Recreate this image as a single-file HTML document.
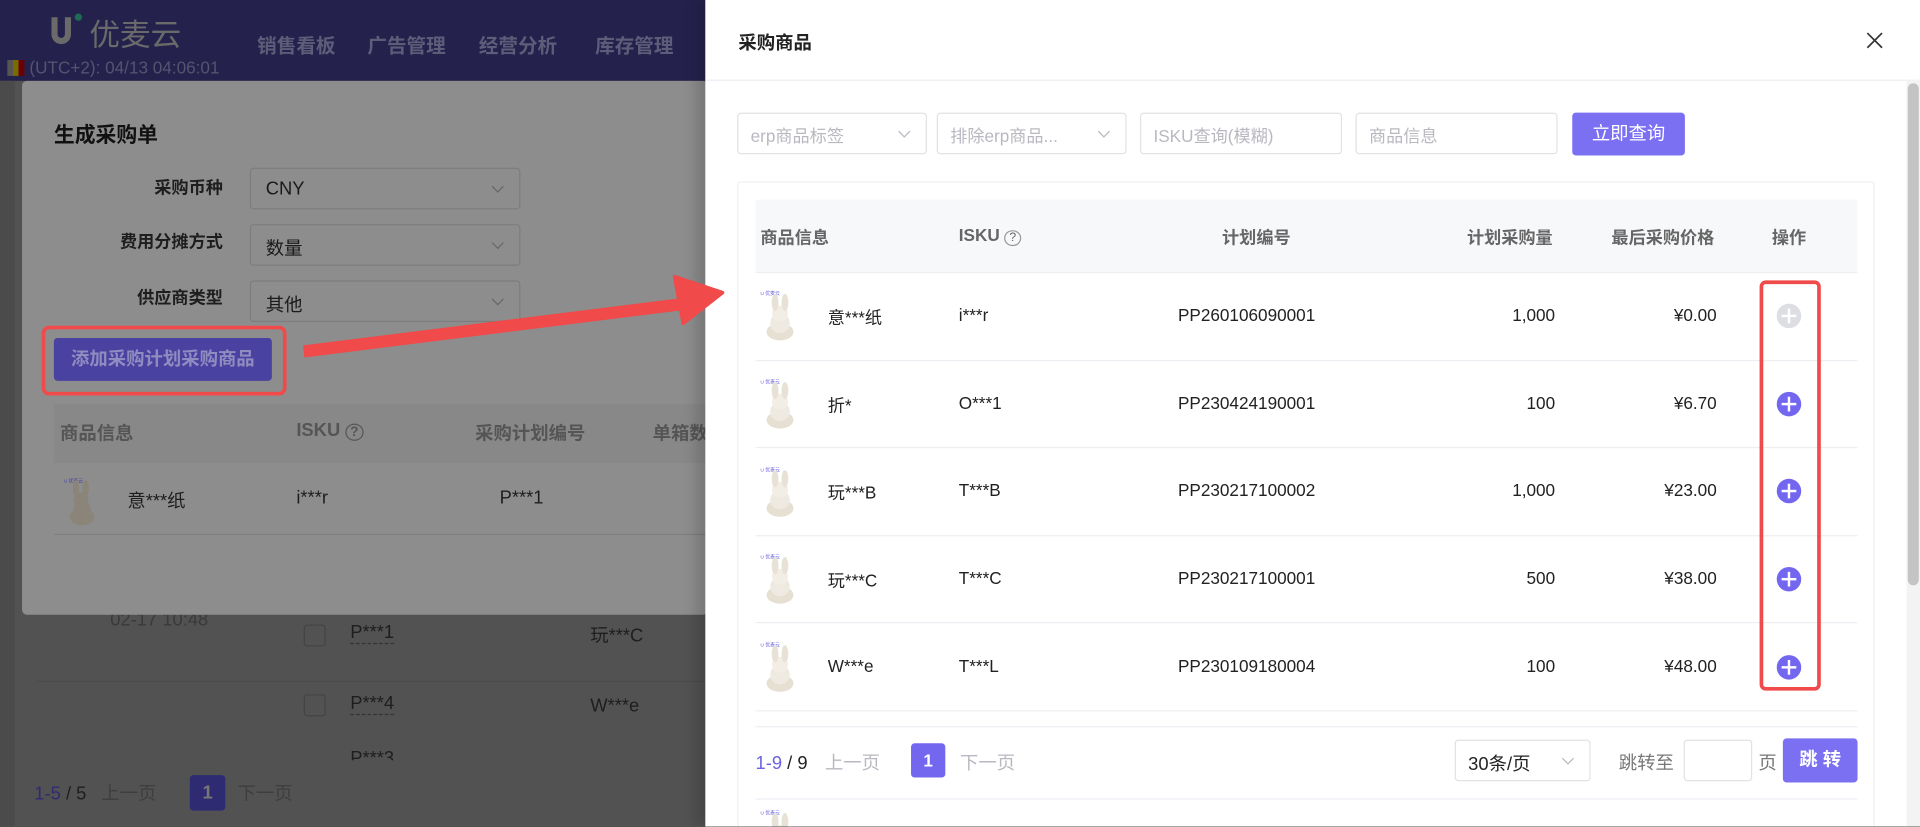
<!DOCTYPE html>
<html><head><meta charset="utf-8">
<style>
*{box-sizing:border-box;margin:0;padding:0}
html,body{width:1920px;height:827px;overflow:hidden;background:#525252;font-family:"Liberation Sans","Noto Sans CJK SC",sans-serif}
#w{position:absolute;left:0;top:0;width:1568px;height:675px;overflow:hidden;transform:scale(1.22449);transform-origin:0 0}
.a{position:absolute;white-space:nowrap}
.hdr{left:0;top:0;width:576px;height:66px;background:#24224d}
.nav{top:24px;font-size:16px;font-weight:bold;color:#5e5c78}
.modal{left:18px;top:66px;width:560px;height:436px;background:#8d8d8d;border-radius:4px}
.lbl{font-size:14px;font-weight:bold;color:#1e1e1e;text-align:right;width:140px}
.sel{left:204px;width:221px;height:34px;border:1px solid #7d7d7d;border-radius:3px;background:#8d8d8d;font-size:15px;color:#1a1a1a;padding:8px 12px}
.sel:after,.dd:after{content:"";position:absolute;right:14px;top:11px;width:6px;height:6px;border-right:1px solid #666;border-bottom:1px solid #666;transform:rotate(45deg)}
.drawer{left:576px;top:0;width:992px;height:675px;background:#fff;box-shadow:-8px 0 10px rgba(0,0,0,0.15)}
.fs{top:92px;height:34px;border:1px solid #e2e2e6;border-radius:3px;font-size:14px;color:#b8b8c0;padding:8px 10px}
.dd:after{border-color:#b8b8c0}
.th{top:184px;font-size:14px;color:#666;font-weight:bold}
.td{font-size:14px;color:#222}
.line{height:1px;background:#eceef2}
.plus{width:20px;height:20px;border-radius:50%;background:#7367f0}
.plus:before,.plus:after{content:"";position:absolute;background:#fff;left:4px;top:9px;width:12px;height:2px}
.plus:after{left:9px;top:4px;width:2px;height:12px}
</style></head><body><div id="w">
<div class="a hdr"></div>
<div class="a" style="left:42px;top:14px;width:16px;height:22px;border:5px solid #6a6a6a;border-top:none;border-radius:0 0 9px 9px"></div>
<div class="a" style="left:61px;top:11px;width:6px;height:6px;border-radius:50%;background:#1d6b50"></div>
<div class="a" style="left:73px;top:9px;font-size:25px;color:#6a6a6a">优麦云</div>
<div class="a nav" style="left:210px">销售看板</div>
<div class="a nav" style="left:300px">广告管理</div>
<div class="a nav" style="left:391px">经营分析</div>
<div class="a nav" style="left:486px">库存管理</div>
<div class="a" style="left:6px;top:49px;width:14px;height:13px;background:linear-gradient(90deg,#555 33%,#7a6a00 33% 66%,#6a0000 66%)"></div>
<div class="a" style="left:24px;top:47px;font-size:14px;color:#55536e">(UTC+2): 04/13 04:06:01</div>
<div class="a" style="left:0;top:66px;width:12px;height:609px;background:#4b4b4b"></div>
<div class="a" style="left:90px;top:498px;font-size:15px;color:#3a3a3a">02-17 10:48</div>
<div class="a" style="left:248px;top:510px;width:18px;height:18px;border:1px solid #444;border-radius:3px"></div>
<div class="a" style="left:286px;top:508px;font-size:15px;color:#1e1e1e;border-bottom:1px dashed #333">P***1</div>
<div class="a" style="left:482px;top:508px;font-size:15px;color:#1e1e1e">玩***C</div>
<div class="a" style="left:30px;top:556px;width:546px;height:1px;background:#4a4a4a"></div>
<div class="a" style="left:248px;top:567px;width:18px;height:18px;border:1px solid #444;border-radius:3px"></div>
<div class="a" style="left:286px;top:566px;font-size:15px;color:#1e1e1e;border-bottom:1px dashed #333">P***4</div>
<div class="a" style="left:482px;top:568px;font-size:15px;color:#1e1e1e">W***e</div>
<div class="a" style="left:286px;top:611px;font-size:15px;color:#1e1e1e;height:10px;overflow:hidden">P***3</div>
<div class="a" style="left:40px;top:621px;width:536px;height:54px;background:#525252"></div>
<div class="a" style="left:28px;top:637px;font-size:15px;color:#1e1e1e"><span style="color:#2f2b72">1-5</span> / 5 <span style="color:#3e3e3e;margin-left:8px">上一页</span></div>
<div class="a" style="left:155px;top:633px;width:29px;height:29px;background:#2f2b72;border-radius:3px;color:#777;font-weight:bold;text-align:center;line-height:29px;font-size:15px">1</div>
<div class="a" style="left:194px;top:637px;font-size:15px;color:#3e3e3e">下一页</div>
<div class="a modal"></div>
<div class="a" style="left:44px;top:96px;font-size:17px;font-weight:bold;color:#111">生成采购单</div>
<div class="a lbl" style="left:42px;top:143px">采购币种</div>
<div class="a lbl" style="left:42px;top:187px">费用分摊方式</div>
<div class="a lbl" style="left:42px;top:233px">供应商类型</div>
<div class="a sel" style="top:137px">CNY</div>
<div class="a sel" style="top:183px">数量</div>
<div class="a sel" style="top:229px">其他</div>
<div class="a" style="left:44px;top:276px;width:178px;height:35px;background:#4a42a0;border-radius:3px;color:#8f8cc0;font-size:15px;font-weight:bold;text-align:center;line-height:35px">添加采购计划采购商品</div>
<div class="a" style="left:34px;top:266px;width:200px;height:57px;border:3px solid #f04a4a;border-radius:6px"></div>
<div class="a" style="left:44px;top:330px;width:534px;height:48px;background:#888"></div>
<div class="a" style="left:49px;top:343px;font-size:15px;font-weight:bold;color:#555">商品信息</div>
<div class="a" style="left:242px;top:343px;font-size:15px;font-weight:bold;color:#555">ISKU <span style="font-size:11px;border:1px solid #555;border-radius:50%;padding:0 3px">?</span></div>
<div class="a" style="left:388px;top:343px;font-size:15px;font-weight:bold;color:#555">采购计划编号</div>
<div class="a" style="left:533px;top:343px;font-size:15px;font-weight:bold;color:#555">单箱数</div>
<div class="a" style="left:44px;top:436px;width:534px;height:1px;background:#7f7f7f"></div>
<svg class="a" style="left:50px;top:388px" width="34" height="42"><text x="2" y="6" font-size="4" fill="#4a42a0">U 优麦云</text><ellipse cx="17" cy="34" rx="10" ry="7" fill="#8a8578"/><ellipse cx="17" cy="28" rx="7" ry="8" fill="#8a8578"/><circle cx="16" cy="20" r="6" fill="#8a8578"/><ellipse cx="12" cy="11" rx="2.5" ry="7" fill="#8a8578"/><ellipse cx="20" cy="11" rx="2.5" ry="7" fill="#8a8578"/></svg>
<div class="a" style="left:104px;top:398px;font-size:15px;color:#1e1e1e">意***纸</div>
<div class="a" style="left:242px;top:398px;font-size:15px;color:#1e1e1e">i***r</div>
<div class="a" style="left:408px;top:398px;font-size:15px;color:#1e1e1e">P***1</div>
<div class="a drawer"></div>
<svg class="a" style="left:0;top:0" width="600" height="300"><line x1="248" y1="287" x2="560" y2="248" stroke="#f04a4a" stroke-width="10"/><polygon points="590,239 551,226 558,264" fill="#f04a4a" stroke="#f04a4a" stroke-width="3" stroke-linejoin="round"/></svg>
<div class="a" style="left:603px;top:24px;font-size:15px;font-weight:bold;color:#222">采购商品</div>
<svg class="a" style="left:1524px;top:26px" width="14" height="14"><path d="M1 1L13 13M13 1L1 13" stroke="#333" stroke-width="1.4"/></svg>
<div class="a line" style="left:576px;top:65px;width:992px"></div>
<div class="a" style="left:1557px;top:65px;width:11px;height:610px;background:#f3f3f3"></div>
<div class="a" style="left:1558px;top:68px;width:9px;height:410px;background:#c4c4c4;border-radius:5px"></div>
<div class="a fs dd" style="left:602px;width:155px">erp商品标签</div>
<div class="a fs dd" style="left:765px;width:155px">排除erp商品...</div>
<div class="a fs" style="left:931px;width:165px">ISKU查询(模糊)</div>
<div class="a fs" style="left:1107px;width:165px">商品信息</div>
<div class="a" style="left:1284px;top:92px;width:92px;height:35px;background:#7b70f2;border-radius:3px;color:#fff;font-size:15px;text-align:center;line-height:35px">立即查询</div>
<div class="a" style="left:602px;top:148px;width:929px;height:540px;border:1px solid #eef0f3;border-radius:3px"></div>
<div class="a" style="left:617px;top:163px;width:900px;height:59px;background:#f7f8fa"></div>
<div class="a th" style="left:621px">商品信息</div>
<div class="a th" style="left:783px">ISKU <span style="font-size:10px;font-weight:normal;border:1px solid #999;border-radius:50%;padding:0 3px">?</span></div>
<div class="a th" style="left:998px">计划编号</div>
<div class="a th" style="left:1198px">计划采购量</div>
<div class="a th" style="left:1316px">最后采购价格</div>
<div class="a th" style="left:1447px">操作</div>
<div class="a line" style="left:617px;top:222px;width:900px"></div>
<div class="a line" style="left:617px;top:294px;width:900px"></div>
<div class="a line" style="left:617px;top:365px;width:900px"></div>
<div class="a line" style="left:617px;top:437px;width:900px"></div>
<div class="a line" style="left:617px;top:508px;width:900px"></div>
<div class="a line" style="left:617px;top:580px;width:900px"></div>
<div class="a line" style="left:617px;top:593px;width:900px"></div>
<div class="a line" style="left:617px;top:652px;width:900px"></div>
<svg width="0" height="0" style="position:absolute"><defs><g id="b"><text x="1" y="5" font-size="4" fill="#6c63e0">U 优麦云</text><ellipse cx="17" cy="35" rx="11" ry="7" fill="#e6e0d3"/><ellipse cx="17" cy="28" rx="8" ry="8" fill="#efeae1"/><circle cx="17" cy="20" r="6.5" fill="#f2eee6"/><ellipse cx="13" cy="11" rx="2.8" ry="7" fill="#e8e2d6"/><ellipse cx="21" cy="11" rx="2.8" ry="7" fill="#e8e2d6"/></g></defs></svg>
<svg class="a" style="left:620px;top:236px" width="36" height="44"><use href="#b"/></svg>
<svg class="a" style="left:620px;top:308px" width="36" height="44"><use href="#b"/></svg>
<svg class="a" style="left:620px;top:380px" width="36" height="44"><use href="#b"/></svg>
<svg class="a" style="left:620px;top:451px" width="36" height="44"><use href="#b"/></svg>
<svg class="a" style="left:620px;top:523px" width="36" height="44"><use href="#b"/></svg>
<svg class="a" style="left:620px;top:660px" width="36" height="15"><use href="#b"/></svg>
<div class="a td" style="left:676px;top:249px">意***纸</div><div class="a td" style="left:783px;top:249px">i***r</div><div class="a td" style="left:962px;top:249px">PP260106090001</div><div class="a td" style="left:1200px;top:249px;width:70px;text-align:right">1,000</div><div class="a td" style="left:1320px;top:249px;width:82px;text-align:right">¥0.00</div>
<div class="a td" style="left:676px;top:321px">折*</div><div class="a td" style="left:783px;top:321px">O***1</div><div class="a td" style="left:962px;top:321px">PP230424190001</div><div class="a td" style="left:1200px;top:321px;width:70px;text-align:right">100</div><div class="a td" style="left:1320px;top:321px;width:82px;text-align:right">¥6.70</div>
<div class="a td" style="left:676px;top:392px">玩***B</div><div class="a td" style="left:783px;top:392px">T***B</div><div class="a td" style="left:962px;top:392px">PP230217100002</div><div class="a td" style="left:1200px;top:392px;width:70px;text-align:right">1,000</div><div class="a td" style="left:1320px;top:392px;width:82px;text-align:right">¥23.00</div>
<div class="a td" style="left:676px;top:464px">玩***C</div><div class="a td" style="left:783px;top:464px">T***C</div><div class="a td" style="left:962px;top:464px">PP230217100001</div><div class="a td" style="left:1200px;top:464px;width:70px;text-align:right">500</div><div class="a td" style="left:1320px;top:464px;width:82px;text-align:right">¥38.00</div>
<div class="a td" style="left:676px;top:536px">W***e</div><div class="a td" style="left:783px;top:536px">T***L</div><div class="a td" style="left:962px;top:536px">PP230109180004</div><div class="a td" style="left:1200px;top:536px;width:70px;text-align:right">100</div><div class="a td" style="left:1320px;top:536px;width:82px;text-align:right">¥48.00</div>
<div class="a plus" style="left:1451px;top:248px;background:#dcdee4"></div>
<div class="a plus" style="left:1451px;top:320px"></div>
<div class="a plus" style="left:1451px;top:391px"></div>
<div class="a plus" style="left:1451px;top:463px"></div>
<div class="a plus" style="left:1451px;top:535px"></div>
<div class="a" style="left:1437px;top:229px;width:50px;height:335px;border:3px solid #f04a4a;border-radius:5px"></div>
<div class="a" style="left:617px;top:612px;font-size:15px;color:#222"><span style="color:#6c63e0">1-9</span> / 9 <span style="color:#b8b8c0;margin-left:10px">上一页</span></div>
<div class="a" style="left:744px;top:607px;width:28px;height:28px;background:#7367f0;border-radius:3px;color:#fff;font-weight:bold;text-align:center;line-height:28px;font-size:14px">1</div>
<div class="a" style="left:784px;top:612px;font-size:15px;color:#b8b8c0">下一页</div>
<div class="a fs dd" style="left:1188px;top:604px;width:111px;color:#222;font-size:15px">30条/页</div>
<div class="a" style="left:1322px;top:612px;font-size:15px;color:#777">跳转至</div>
<div class="a" style="left:1375px;top:604px;width:56px;height:34px;border:1px solid #e2e2e6;border-radius:3px"></div>
<div class="a" style="left:1436px;top:612px;font-size:15px;color:#777">页</div>
<div class="a" style="left:1456px;top:603px;width:61px;height:36px;background:#7b70f2;border-radius:3px;color:#fff;font-size:15px;font-weight:bold;text-align:center;line-height:36px">跳 转</div>
</div></body></html>
